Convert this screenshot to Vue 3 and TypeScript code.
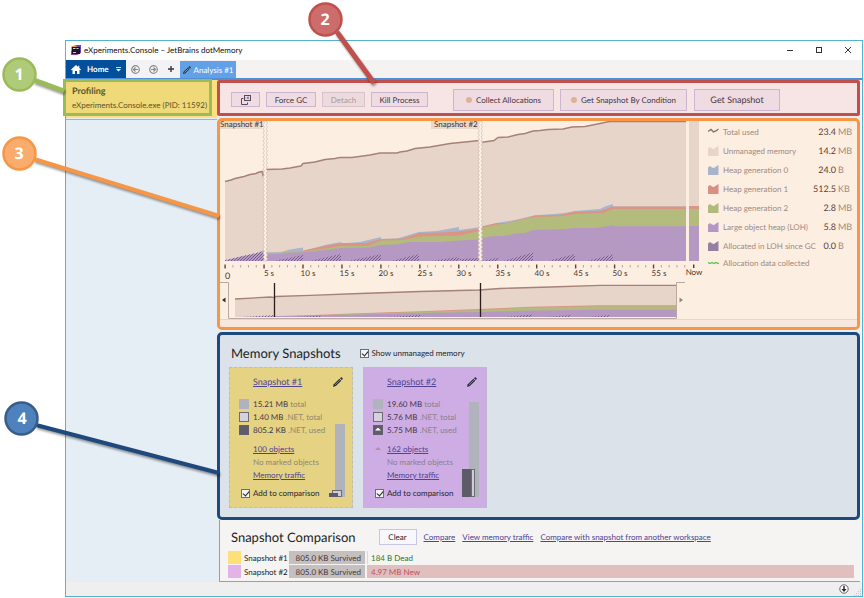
<script setup lang="ts">
import { ref } from 'vue'

interface LegendItem {
  name: string
  value: string
  unit: string
  kind: 'line' | 'area' | 'wave'
  color: string
}

interface Snapshot {
  id: number
  name: string
  theme: string
  total: string
  netTotal: string
  netUsed: string
  objects: string
  grown: boolean
  bars: { total: number; net: number; used: number }
}

const legend: LegendItem[] = [
  { name: 'Total used', value: '23.4', unit: 'MB', kind: 'line', color: '#8f7068' },
  { name: 'Unmanaged memory', value: '14.2', unit: 'MB', kind: 'area', color: '#e7d5c9' },
  { name: 'Heap generation 0', value: '24.0', unit: 'B', kind: 'area', color: '#a9b3c9' },
  { name: 'Heap generation 1', value: '512.5', unit: 'KB', kind: 'area', color: '#d98f84' },
  { name: 'Heap generation 2', value: '2.8', unit: 'MB', kind: 'area', color: '#b1b97c' },
  { name: 'Large object heap (LOH)', value: '5.8', unit: 'MB', kind: 'area', color: '#b397c4' },
  { name: 'Allocated in LOH since GC', value: '0.0', unit: 'B', kind: 'area', color: '#9680a0' },
  { name: 'Allocation data collected', value: '', unit: '', kind: 'wave', color: '#5cc04a' },
]

const snapshots: Snapshot[] = [
  {
    id: 1, name: 'Snapshot #1', theme: 'yellow', total: '15.21 MB', netTotal: '1.40 MB', netUsed: '805.2 KB',
    objects: '100 objects', grown: false, bars: { total: 73, net: 7, used: 4 },
  },
  {
    id: 2, name: 'Snapshot #2', theme: 'purple', total: '19.60 MB', netTotal: '5.76 MB', netUsed: '5.75 MB',
    objects: '162 objects', grown: true, bars: { total: 95, net: 28, used: 28 },
  },
]

const showUnmanaged = ref(true)
const compared = ref<number[]>([1, 2])

const tickStep = 39
const ticks = Array.from({ length: 60 }, (_, i) => ({
  x: 225 + (i * 38.95) / 5,
  major: i % 5 === 0,
}))
const tickLabels = Array.from({ length: 11 }, (_, i) => ({
  x: 269 + i * tickStep,
  text: `${(i + 1) * 5} s`,
}))

const totalLine =
  '225,181.5 231,180 235,178.5 244,176.5 250,174.5 256,173.5 258,172.5 262,171.5 263,175 264,172 266,169.5 282,169 290,168 298,166.5 301,166 303,163.5 315,162 325,159.5 335,158.5 340,157.5 352,157.5 370,155 380,153 397,153 400,152 407,151 415,148.5 430,147 450,143.5 455,143 470,141.5 479,140.5 481,142.5 494,140.5 498,137.5 508,137 518,134.5 525,133.5 533,131 540,130.5 548,129.5 563,129 572,127 585,126.5 600,123.5 608,121.8 611,121.4 686,121.4'
const gen0 =
  '251,256 264,250 266,252.5 281,252 290,249.5 303,247.5 303,251 325,245 341,242 341,243.5 360,242 381,237 381,239 397,238.5 419,232 437,231 459,227 459,230 481,227 497,223 515,220 535,215.3 550,214.3 565,213 575,211 600,209 605,206.5 613,204 613,206.5 686,206.5'
const gen1 =
  '303,250.5 325,246 341,243 366,243 381,239 403,238.5 419,233 440,232.5 459,231.5 475,229.5 479,228 481,226.5 497,223 507,223 520,219.5 530,217 535,215.5 560,215 575,211.5 600,211 613,206.5 686,206.5'
const gen2 =
  '266,252.8 281,252.8 300,250.8 303,251.5 325,248.5 341,246 368,246 381,240.5 403,240 419,236.5 460,235.5 479,231 481,228 497,224.5 507,223.3 520,220 530,217.8 535,217 560,216.3 575,214 603,213 613,209 686,209'
const loh =
  '225,260.5 243,256 264,252 266,254 281,254 290,252.5 303,252.3 325,250 341,248 368,247.5 381,245 397,244.5 409,242 440,242 460,240.5 479,239.5 481,238.5 490,236.5 508,235.5 515,233.5 525,233 533,230 565,229 575,228 595,228 609,226 612,225.3 614,226.3 686,226.3'

const hatches = [
  '225,261 225,260 264,251 264,261',
  '274,261 303,255 303,261',
  '310,261 341,254 341,261',
  '348,261 381,254 381,261',
  '391,261 419,254 419,261',
  '430,261 459,257 459,261',
  '460,261 460,259 479,258 479,261',
  '481,261 498,257.5 498,261',
  '503,261 533,252.5 533,261',
  '548,261 575,254 575,261',
  '587,261 613,254.5 613,261',
]

const overviewHatches = [
  '242,317 274,315 274,317', '294,317 322,315.5 322,317', '385,317 420,315 420,317', '506,317 532,314.5 532,317',
  '546,317 571,315 571,317', '588,317 610,315 610,317',
]

function closed(points: string, from: number, to: number, base: number): string {
  return `${from},${base} ${points} ${to},${base}`
}

function zigzag(x: number, width: number): string {
  let d = `M${x} 121`
  for (let y = 121; y < 261; y += 4) d += `L${x + 1.5} ${y + 2}L${x} ${y + 4}`
  d += `H${x + width}`
  for (let y = 261; y > 121; y -= 4) d += `L${x + width + 1.5} ${y - 2}L${x + width} ${y - 4}`
  return d + 'Z'
}
</script>

<template>
  <div class="page">
    <div class="window">
      <header class="titlebar">
        <svg class="logo" viewBox="0 0 10 10" width="10" height="10">
          <path d="M0 2L5 0h5v8l-4 2H0z" fill="#a13a8c" />
          <path d="M0 2L5 0 6 3 0 6z" fill="#ef9a3d" />
          <path d="M6 0h4v7L7 5z" fill="#5b4bc9" />
          <rect x="1" y="2" width="8" height="7" fill="#191522" />
          <path d="M2 3.500h2.500M5.500 3.500h2M2 7.500h3" stroke="#fff" stroke-width=".8" />
        </svg>
        <span class="title">eXperiments.Console – JetBrains dotMemory</span>
        <button class="win" aria-label="Minimize"><svg viewBox="0 0 8 8" width="8" height="8"><path d="M1 4.500h6" stroke="#333" /></svg></button>
        <button class="win" aria-label="Maximize"><svg viewBox="0 0 8 8" width="8" height="8"><rect x="1.500" y="1.500" width="5" height="5" fill="none" stroke="#333" /></svg></button>
        <button class="win" aria-label="Close"><svg viewBox="0 0 8 8" width="8" height="8"><path d="M1 1l6 6M7 1L1 7" stroke="#333" /></svg></button>
      </header>

      <nav class="tabs">
        <button class="home">
          <svg viewBox="0 0 10 9" width="10" height="9"><path d="M5 0L0 4.600l.8.700L1.500 4.700V9H4V6h2v3h2.500V4.700l.7.600.8-.7L8.300 3V.8H7.200V2z" fill="#fff" /></svg>
          <span>Home</span>
          <svg class="caret" viewBox="0 0 5 5" width="5" height="5"><path d="M0 .5h5" stroke="#fff" stroke-width=".8" /><path d="M0 2h5L2.500 4.500z" fill="#fff" /></svg>
        </button>
        <button class="nav" aria-label="Back">
          <svg viewBox="0 0 9 9" width="9" height="9" fill="none" stroke="#8a8a8a" stroke-width="1.200"><circle cx="4.500" cy="4.500" r="3.800" /><path d="M7 4.500H2.500M4.500 2.500l-2 2 2 2" /></svg>
        </button>
        <button class="nav" aria-label="Forward">
          <svg viewBox="0 0 9 9" width="9" height="9" fill="none" stroke="#8a8a8a" stroke-width="1.200"><circle cx="4.500" cy="4.500" r="3.800" /><path d="M2 4.500h4.500M4.500 2.500l2 2-2 2" /></svg>
        </button>
        <button class="nav" aria-label="New tab">
          <svg viewBox="0 0 8 8" width="8" height="8"><path d="M4 1v6M1 4h6" stroke="#42323a" stroke-width="1.400" /></svg>
        </button>
        <button class="tab">
          <svg viewBox="0 0 8 8" width="8" height="8"><path d="M0 8l.6-2.200 4.600-4.600 1.600 1.600-4.600 4.600z" fill="#26303c" /><path d="M5.600.8L6.400 0 8 1.600l-.8.800z" fill="#26303c" /><path d="M1.500 6.500l4-4" stroke="#d8dde4" stroke-width=".6" /></svg>
          <span>Analysis #1</span>
        </button>
      </nav>

      <div class="body">
        <aside class="sidebar">
          <div class="session">
            <strong>Profiling</strong>
            <span>eXperiments.Console.exe (PID: 11592)</span>
            <div class="frame"></div>
          </div>
        </aside>

        <main class="panels">
          <section class="panel toolbar">
            <button class="btn small icon" aria-label="Detach window">
              <svg viewBox="0 0 10 10" width="10" height="10" fill="none" stroke="#5b4a55"><rect x="3.500" y=".5" width="6" height="5" /><path d="M2.500 3.500h-2v6h6v-2" /><path d="M4.500 3h1M7 1.500v2.500M6 3h2" stroke="#6a7a9a" /></svg>
            </button>
            <button class="btn small gc">Force GC</button>
            <button class="btn small detach" disabled>Detach</button>
            <button class="btn small kill">Kill Process</button>
            <button class="btn tall collect"><i class="dot"></i>Collect Allocations</button>
            <button class="btn tall cond"><i class="dot"></i>Get Snapshot By Condition</button>
            <button class="btn tall get">Get Snapshot</button>
          </section>

          <section class="panel timeline">
            <div class="timeline-row">
              <svg class="chart" viewBox="220 121 480 198">
                <defs>
                  <pattern id="hatch" width="3" height="3" patternUnits="userSpaceOnUse">
                    <path d="M-1 1L1-1M0 3L3 0M2 4L4 2" stroke="#6a4d7c" stroke-width=".8" />
                  </pattern>
                </defs>

                <polygon :points="closed(totalLine, 225, 686, 261)" fill="#e7d5c9" />
                <polygon :points="closed(gen0, 251, 686, 261)" fill="#a9b5c9" />
                <polygon :points="closed(gen1, 303, 686, 261)" fill="#dc9486" />
                <polygon :points="closed(gen2, 266, 686, 261)" fill="#b3bb7d" />
                <polygon :points="closed(loh, 225, 686, 261)" fill="#b699c2" />
                <polygon v-for="h in hatches" :key="h" :points="h" fill="url(#hatch)" />
                <polyline :points="totalLine" fill="none" stroke="#a58178" stroke-width="1.500" />

                <rect x="689" y="121" width="10" height="86" fill="#e7d5c9" />
                <rect x="689" y="206" width="10" height="3" fill="#dc9486" />
                <rect x="689" y="209" width="10" height="17" fill="#b3bb7d" />
                <rect x="689" y="226" width="10" height="35" fill="#b699c2" />

                <rect x="220" y="121" width="42" height="8" fill="#e9d8cc" />
                <rect x="431" y="121" width="47" height="8" fill="#e9d8cc" />
                <path :d="zigzag(263, 3)" fill="#fdf1e8" stroke="#d0bbae" stroke-width=".7" />
                <path :d="zigzag(478, 3)" fill="#fdf1e8" stroke="#d0bbae" stroke-width=".7" />
                <text x="220" y="127" class="marker">Snapshot #1</text>
                <text x="434" y="127" class="marker">Snapshot #2</text>

                <template v-for="t in ticks" :key="t.x">
                  <rect v-if="t.major" :x="t.x - 0.6" y="264.500" width="1.400" height="4" fill="#63423c" />
                  <rect v-else :x="t.x - 0.4" y="265" width="1" height="2.500" fill="#b9a396" />
                </template>
                <rect x="693" y="264.500" width="1.400" height="3.500" fill="#4a3632" />
                <text x="227.500" y="279" class="axis zero">0</text>
                <text v-for="l in tickLabels" :key="l.text" :x="l.x" y="276" class="axis">{{ l.text }}</text>
                <text x="694" y="275" class="axis">Now</text>

                <polygon points="235,317 235,299 270,297 276,297 310,295.300 360,293.500 420,291.500 479,290 500,288.500 550,287 600,285.300 676,285.300 676,317" fill="#e7d5c9" />
                <polygon points="290,316 350,313.500 420,311.300 479,309 530,306.800 600,305.300 676,305.300 676,317 290,317" fill="#dc9486" />
                <polygon points="290,317 350,314 420,312 479,310 530,307.500 600,306.300 676,306.300 676,317" fill="#b3bb7d" />
                <polygon points="235,317 290,315.800 350,314.800 420,313 479,312 530,310.500 600,309.800 676,309.800 676,317" fill="#b699c2" />
                <polygon v-for="h in overviewHatches" :key="h" :points="h" fill="url(#hatch)" />
                <polyline points="235,299 270,297 274,297.500 276,296.500 310,295.300 360,293.500 420,291.500 479,290 500,288.500 550,287 600,285.300 676,285.300" fill="none" stroke="#a58178" stroke-width="1.300" />
                <path d="M220 282.500h8.500v36h448v-36h8.500" fill="none" stroke="#b9a9a0" />
                <path d="M274.500 283v34M480.500 283v34" stroke="#2c1d1a" stroke-width="1.300" />
                <path d="M225.500 297.500v5L222 300z" fill="#3c2a26" />
                <path d="M679.500 297.500v5L683 300z" fill="#9a857b" />
              </svg>

              <ul class="legend">
                <li v-for="item in legend" :key="item.name">
                  <svg viewBox="0 0 11 10" width="11" height="10">
                    <path v-if="item.kind === 'area'" d="M0 2.500L2 1 4 2.500 6 3 8 1.500 10.500 0V10H0z" :fill="item.color" />
                    <path v-else-if="item.kind === 'line'" d="M0 4.500L3 2.500 5.500 5 8 4 10.500 2" fill="none" :stroke="item.color" stroke-width="1.400" />
                    <path v-else d="M0 4.500L2 5.500 4 4.500 6 5.500 8 4.500 10 5.500 11 5" fill="none" :stroke="item.color" stroke-width="1.300" />
                  </svg>
                  <span class="name">{{ item.name }}</span>
                  <span class="value">{{ item.value }}</span>
                  <span class="unit">{{ item.unit }}</span>
                </li>
              </ul>
            </div>
            <div class="strip"></div>
          </section>

          <section class="panel snapshots">
            <div class="head">
              <h2>Memory Snapshots</h2>
              <label class="check"><input v-model="showUnmanaged" type="checkbox" />Show unmanaged memory</label>
            </div>
            <div class="cards">
              <article v-for="s in snapshots" :key="s.id" class="card" :class="s.theme">
                <div class="card-main">
                  <a class="name" href="#">{{ s.name }}</a>
                  <div class="stat"><i class="sq total"></i><span>{{ s.total }} <em>total</em></span></div>
                  <div class="stat"><i class="sq net"></i><span>{{ s.netTotal }} <em>.NET, total</em></span></div>
                  <div class="stat"><i class="sq used" :class="{ up: s.grown }"></i><span>{{ s.netUsed }} <em>.NET, used</em></span></div>
                  <div class="stat objects"><i class="arrow" :class="{ shown: s.grown }"></i><a href="#">{{ s.objects }}</a></div>
                  <div class="stat"><i class="arrow"></i><em>No marked objects</em></div>
                  <div class="stat"><i class="arrow"></i><a href="#">Memory traffic</a></div>
                  <label class="check add"><input v-model="compared" type="checkbox" :value="s.id" />Add to comparison</label>
                </div>
                <div class="card-side">
                  <button class="edit" :aria-label="`Rename ${s.name}`">
                    <svg viewBox="0 0 10 10" width="10" height="10"><path d="M0 10l.8-2.800 5.600-5.400 1.900 1.900-5.500 5.400z" fill="#2a2c3a" /><path d="M7 1.200L8.200 0 10 1.800 8.900 3z" fill="#2a2c3a" /><path d="M2 7.800l4.800-4.600" stroke="#aab0b8" stroke-width=".7" /></svg>
                  </button>
                  <div class="bars" :class="s.theme">
                    <i class="bar-used" :style="{ height: s.bars.used + 'px' }"></i>
                    <i class="bar-net" :style="{ height: s.bars.net + 'px' }"></i>
                    <i class="bar-total" :style="{ height: s.bars.total + 'px' }"></i>
                  </div>
                </div>
              </article>
            </div>
          </section>

          <section class="comparison">
            <div class="head">
              <h2>Snapshot Comparison</h2>
              <button class="clear">Clear</button>
              <a href="#">Compare</a>
              <a href="#">View memory traffic</a>
              <a href="#">Compare with snapshot from another workspace</a>
            </div>
            <table>
              <tbody>
                <tr>
                  <td class="swatch yellow"></td>
                  <th scope="row">Snapshot #1</th>
                  <td class="survived">805.0 KB Survived</td>
                  <td class="dead">184 B Dead</td>
                </tr>
                <tr>
                  <td class="swatch purple"></td>
                  <th scope="row">Snapshot #2</th>
                  <td class="survived">805.0 KB Survived</td>
                  <td class="new">4.97 MB New</td>
                </tr>
              </tbody>
            </table>
          </section>
        </main>
      </div>

      <footer class="status">
        <svg viewBox="0 0 10 10" width="10" height="10"><circle cx="5" cy="5" r="4.200" fill="#fff" stroke="#555" stroke-width=".9" /><path d="M4.300 2h1.400v3H7.500L5 8 2.500 5h1.800z" fill="#222" /></svg>
        <svg class="grip" viewBox="0 0 8 8" width="8" height="8"><path d="M6 1h1v1H6zM4 3h1v1H4zM6 3h1v1H6zM2 5h1v1H2zM4 5h1v1H4zM6 5h1v1H6zM0 7h1v1H0zM2 7h1v1H2zM4 7h1v1H4zM6 7h1v1H6z" fill="#c3c6cf" /></svg>
      </footer>
    </div>

    <svg class="callouts" viewBox="0 0 864 598" width="864" height="598">
      <g class="leaders">
        <path d="M34 80L64 91" stroke="#9bbb59" stroke-width="5" />
        <path d="M337 32L374 83" stroke="#c0504d" stroke-width="5" />
        <path d="M34 159L219 216" stroke="#f79646" stroke-width="4" />
        <path d="M36 425L219 473" stroke="#1f497d" stroke-width="4" />
      </g>
      <g stroke-width="2.500">
        <circle cx="19.500" cy="74.500" r="16" fill="#afca78" stroke="#9bbb59" />
        <circle cx="325.500" cy="19.500" r="16" fill="#cc6c6b" stroke="#c0504d" />
        <circle cx="19.500" cy="153.500" r="16" fill="#f9ac6b" stroke="#f79646" />
        <circle cx="21.500" cy="418.500" r="16" fill="#4f81bd" stroke="#385d8a" />
      </g>
      <g class="digits">
        <text x="19" y="80">1</text>
        <text x="325" y="25">2</text>
        <text x="19" y="159">3</text>
        <text x="22" y="424">4</text>
      </g>
    </svg>
  </div>
</template>

<style>
body {
  background: #fff;
}
</style>

<style scoped>
* {
  box-sizing: border-box;
}
.page {
  position: relative;
  padding: 40px 1px 1px 65px;
  font: 8px/12px Lato, 'Open Sans', sans-serif;
  text-rendering: geometricPrecision;
  color: #2c2429;
}
button {
  font: inherit;
  color: inherit;
  text-rendering: inherit;
  margin: 0;
  padding: 0;
  border: 0;
  background: none;
  display: flex;
  align-items: center;
  justify-content: center;
  white-space: nowrap;
}
h2 {
  margin: 0;
  font-size: 13px;
  line-height: 16px;
  font-weight: 400;
  color: #1e1e24;
  white-space: nowrap;
}
a {
  color: #4f4494;
  text-decoration: underline;
}
svg {
  display: block;
  flex: none;
}
.window {
  border: 1px solid #55b3cf;
  background: #fff;
}
.titlebar {
  display: flex;
  align-items: center;
  height: 19px;
  padding: 0 6px 2px 5px;
}
.title {
  flex: 1;
  margin-left: 3px;
  color: #111;
}
.win {
  width: 16px;
  height: 16px;
  margin-left: 13px;
}
.tabs {
  display: flex;
  height: 20px;
  background: #f4f3f2;
  border-bottom: 2px solid #4f8fd6;
}
.home {
  width: 60px;
  padding: 0 5px;
  justify-content: flex-start;
  background: #02509c;
  color: #fff;
  font-weight: 700;
}
.home span {
  flex: 1;
  text-align: left;
  margin-left: 6px;
}
.nav {
  width: 18px;
  background: #f3f3f6;
}
.tab {
  width: 56px;
  margin-top: 1px;
  gap: 3px;
  background: #62a1e8;
  color: #fff;
}
.body {
  display: grid;
  grid-template-columns: 151px minmax(0, 1fr);
  background: #e5edf5;
}
.session {
  position: relative;
  display: flex;
  flex-direction: column;
  gap: 2px;
  height: 38px;
  padding: 5px 6px;
  background: #ffdf80;
  color: #4f431f;
  white-space: nowrap;
}
.session strong {
  font-size: 9px;
}
.frame {
  position: absolute;
  inset: -1px 5px 2px -3px;
  border: 3px solid #9bbb59;
  background: rgba(155, 187, 89, 0.16);
}
.sidebar::after {
  content: '';
  display: block;
  margin-top: 1px;
  height: 1px;
  background: #9db1cf;
}
.panels {
  display: flex;
  flex-direction: column;
  gap: 2px;
  border-right: 2px solid #f3f7fb;
}
.panel {
  border: 3px solid;
  border-radius: 5px;
  overflow: hidden;
}
.toolbar {
  display: flex;
  align-items: center;
  height: 36px;
  padding: 3px 11px 0;
  border-color: #c0504d;
  border-radius: 2px;
  background: #f7e4e4;
  gap: 6px;
}
.btn {
  border: 1px solid #cdb5cf;
  background: #efdce3;
  color: #46363f;
}
.btn.small {
  height: 15px;
}
.btn.tall {
  height: 22px;
}
.btn:disabled {
  background: #ecdadd;
  border-color: #d8c3cb;
  color: #ab9aa2;
}
.icon {
  width: 29px;
}
.gc {
  width: 50px;
}
.detach {
  width: 43px;
}
.kill {
  width: 57px;
}
.collect {
  width: 101px;
  margin-left: 19px;
}
.cond {
  width: 127px;
}
.get {
  width: 86px;
  margin-left: 1px;
  font-size: 9px;
}
.dot {
  width: 6px;
  height: 6px;
  margin-right: 4px;
  border-radius: 50%;
  background: #ddb295;
}
.timeline {
  border-color: #f79646;
  background: #fdeee2;
}
.timeline-row {
  display: flex;
}
.chart {
  flex: 1;
  min-width: 0;
  overflow: visible;
}
.chart text {
  fill: #4b342e;
}
.marker,
.axis {
  font-size: 8px;
}
.axis {
  text-anchor: middle;
}
.axis.zero {
  font-size: 9px;
}
.strip {
  height: 8px;
  border-top: 1px solid #e8d6ca;
  background: #f7e7dc;
}
.legend {
  width: 157px;
  margin: 0;
  padding: 1px 5px 0 8px;
  list-style: none;
}
.legend li {
  display: grid;
  grid-template-columns: 15px minmax(0, 1fr) 24px 16px;
  align-items: center;
  height: 19px;
  color: #a08a81;
  white-space: nowrap;
}
.legend li:last-child {
  height: 16px;
}
.legend .value {
  font-size: 9px;
  color: #5c3c36;
  text-align: right;
}
.legend .unit {
  font-size: 9px;
  padding-left: 2px;
}
.snapshots {
  border-color: #1f497d;
  background: #dbe2ea;
  padding: 10px 9px 9px;
}
.head {
  display: flex;
  align-items: center;
}
.snapshots .head {
  padding-left: 2px;
  gap: 19px;
  margin-bottom: 6px;
}
.check {
  display: flex;
  align-items: center;
  gap: 3px;
  color: #28252c;
  white-space: nowrap;
}
.check input {
  appearance: none;
  position: relative;
  flex: none;
  width: 9px;
  height: 9px;
  margin: 0;
  border: 1px solid #6d6d7a;
  background: #f1f3f5;
}
.check input:checked::after {
  content: '';
  position: absolute;
  left: 2px;
  top: 0;
  width: 3px;
  height: 5px;
  border: solid #222;
  border-width: 0 1px 1px 0;
  transform: rotate(40deg);
}
.cards {
  display: flex;
  gap: 10px;
}
.card {
  display: flex;
  width: 124px;
  height: 141px;
  padding: 8px 7px 8px 9px;
  border: 1px dashed #b9bcc4;
}
.card.yellow {
  background: #e5d283;
}
.card.purple {
  background: #cdade3;
}
.card-main {
  flex: 1;
  display: flex;
  flex-direction: column;
  align-items: flex-start;
  color: #473849;
  white-space: nowrap;
}
.card-main .name {
  margin: 0 0 9px 14px;
  font-size: 9px;
}
.stat {
  display: flex;
  align-items: center;
  gap: 4px;
  height: 13px;
}
.stat.objects {
  margin-top: 6px;
}
em {
  font-style: normal;
  color: #8b8092;
}
.yellow em {
  color: #90886c;
}
.sq {
  position: relative;
  width: 10px;
  height: 10px;
  border: 1px solid #b0b3bd;
  background: #b0b3bd;
}
.sq.net {
  border-color: #6d6b76;
  background: #d5d2dc;
}
.sq.used {
  border-color: #62606c;
  background: #5f5d69;
}
.sq.up::after,
.arrow.shown::after {
  content: '';
  display: block;
  margin: 2px auto 0;
  width: 6px;
  height: 3px;
  background: #fff;
  clip-path: polygon(0 100%, 50% 0, 100% 100%);
}
.arrow {
  width: 10px;
}
.arrow.shown::after {
  margin-top: 0;
  background: #c08a94;
}
.add {
  margin: 6px 0 0 2px;
}
.card-side {
  width: 20px;
  display: flex;
  flex-direction: column;
  justify-content: space-between;
  align-items: flex-end;
}
.edit {
  width: 10px;
  height: 12px;
  margin-right: 2px;
}
.bars {
  display: flex;
  align-items: flex-end;
  height: 95px;
  margin-bottom: 2px;
}
.bar-used {
  width: 9px;
  background: #5d5b67;
  z-index: 2;
}
.bar-net {
  width: 4px;
  margin-right: -6px;
  border: 1px solid #6d6b76;
  background: #d0cdd8;
  z-index: 1;
}
.bar-total {
  width: 10px;
  background: #b0b3bb;
}
.bars.yellow .bar-net {
  width: 10px;
  margin: 0 -7px 0 -6px;
}
.comparison {
  margin: -2px 0 0 2px;
  height: 62px;
  padding: 8px 4px 0 6px;
  border: 1px solid #8fa0b8;
  border-width: 0 0 1px 1px;
  background: #f5f4f2;
}
.comparison .head {
  padding-left: 5px;
  gap: 7px;
  height: 17px;
  margin-bottom: 5px;
  white-space: nowrap;
}
.clear {
  width: 38px;
  height: 16px;
  margin-left: 16px;
  border: 1px solid #c9c4e4;
  background: #f8f7fb;
}
table {
  width: 100%;
  border-spacing: 2px 1px;
  table-layout: fixed;
}
td,
th {
  height: 13px;
  padding: 0;
  line-height: 12px;
  font-weight: 400;
  text-align: left;
  white-space: nowrap;
}
th {
  width: 44px;
  padding-left: 1px;
  color: #1e1c20;
}
.swatch {
  width: 13px;
}
.swatch.yellow {
  background: #ffdf78;
}
.swatch.purple {
  background: #e2b2e9;
}
.survived {
  width: 76px;
  padding-right: 4px;
  text-align: right;
  background: #c6bfbf;
  color: #463a3d;
}
.dead {
  padding-left: 3px;
  border-left: 1px solid #d3e0cf;
  color: #2a7632;
}
.new {
  padding-left: 4px;
  background: #e2bfbf;
  color: #b9525f;
}
.status {
  display: flex;
  align-items: center;
  justify-content: flex-end;
  gap: 5px;
  height: 14px;
  background: #efefef;
}
.grip {
  align-self: flex-end;
}
.callouts {
  position: absolute;
  left: 0;
  top: 0;
  pointer-events: none;
}
.leaders {
  filter: drop-shadow(1px 2px 1px rgba(0, 0, 0, 0.4));
}
.digits text {
  font-family: 'Open Sans', sans-serif;
  font-size: 16px;
  font-weight: 700;
  fill: #fff;
  text-anchor: middle;
}
</style>
